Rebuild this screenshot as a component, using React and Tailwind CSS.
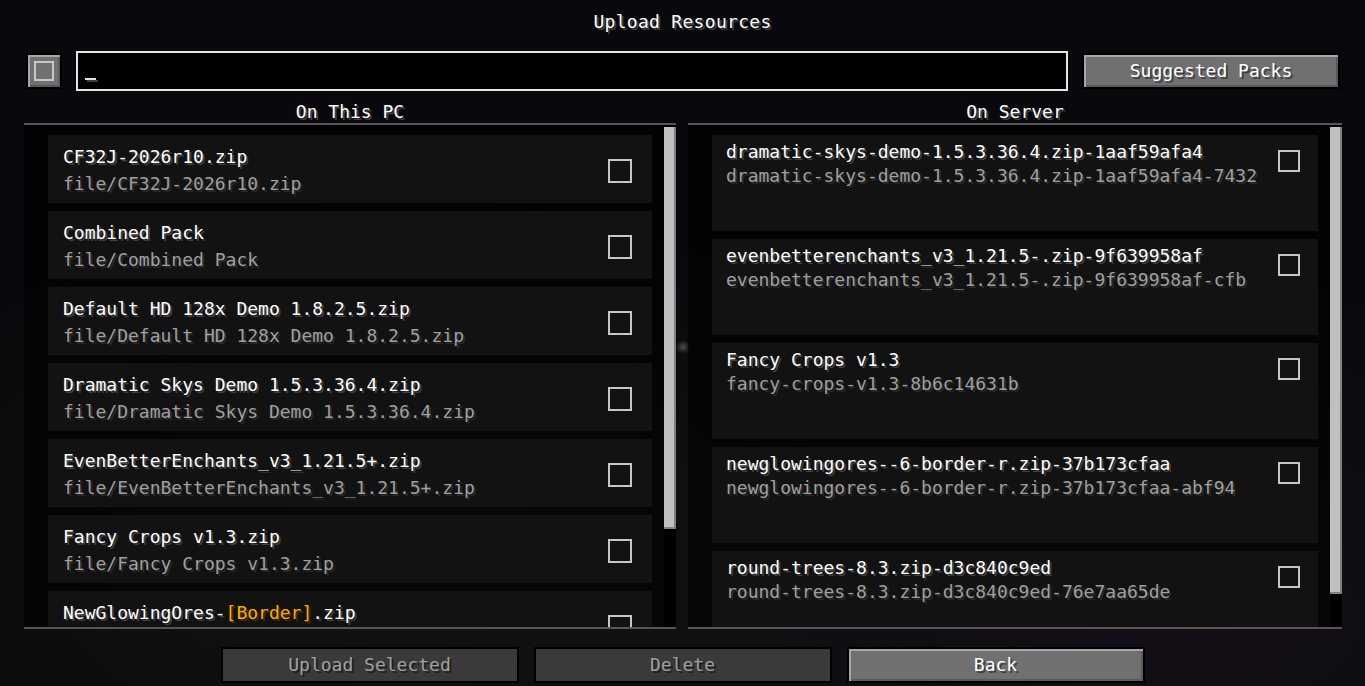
import React from 'react';

const localPacks = [
    { name: 'CF32J-2026r10.zip', path: 'file/CF32J-2026r10.zip' },
    { name: 'Combined Pack', path: 'file/Combined Pack' },
    { name: 'Default HD 128x Demo 1.8.2.5.zip', path: 'file/Default HD 128x Demo 1.8.2.5.zip' },
    { name: 'Dramatic Skys Demo 1.5.3.36.4.zip', path: 'file/Dramatic Skys Demo 1.5.3.36.4.zip' },
    { name: 'EvenBetterEnchants_v3_1.21.5+.zip', path: 'file/EvenBetterEnchants_v3_1.21.5+.zip' },
    { name: 'Fancy Crops v1.3.zip', path: 'file/Fancy Crops v1.3.zip' },
    // scrolled past the bottom edge, only the name row shows
    { name: 'NewGlowingOres-', tag: '[Border]', suffix: '.zip', path: null },
];

const serverPacks = [
    { name: 'dramatic-skys-demo-1.5.3.36.4.zip-1aaf59afa4', id: 'dramatic-skys-demo-1.5.3.36.4.zip-1aaf59afa4-7432' },
    { name: 'evenbetterenchants_v3_1.21.5-.zip-9f639958af', id: 'evenbetterenchants_v3_1.21.5-.zip-9f639958af-cfb' },
    { name: 'Fancy Crops v1.3', id: 'fancy-crops-v1.3-8b6c14631b' },
    { name: 'newglowingores--6-border-r.zip-37b173cfaa', id: 'newglowingores--6-border-r.zip-37b173cfaa-abf94' },
    { name: 'round-trees-8.3.zip-d3c840c9ed', id: 'round-trees-8.3.zip-d3c840c9ed-76e7aa65de' },
];

const white = 'text-white [text-shadow:2px_2px_0_#3f3f3f]';
const grey = 'text-[#a0a0a0] [text-shadow:2px_2px_0_#282828]';

function Checkbox({ size = 'w-[24px] h-[24px]' }) {
    return <div className={`${size} border-2 border-[#c6c6c6] shrink-0`} />;
}

function McButton({ children, disabled, className = '' }) {
    return (
        <div
            className={`border-2 border-black flex items-center justify-center leading-none ${
                disabled
                    ? 'bg-[#3a3a3a] text-[#a0a0a0] [text-shadow:2px_2px_0_#202020]'
                    : 'bg-[#707070] shadow-[inset_2px_2px_0_#a6a6a6,inset_-2px_-2px_0_#5a5a5a] text-white [text-shadow:2px_2px_0_#3f3f3f]'
            } ${className}`}
        >
            {children}
        </div>
    );
}

function Scrollbar({ thumb }) {
    return (
        <div className="w-[12px] shrink-0 bg-black pt-[2px]">
            <div className={`${thumb} bg-[#c0c0c0] border-r-2 border-b-2 border-[#808080]`} />
        </div>
    );
}

function Panel({ width, listWidth, thumb, children }) {
    return (
        <div className={`${width} flex flex-col`}>
            <div className="h-[2px] bg-[#555555]" />
            <div className="flex-1 flex bg-black/60 overflow-hidden">
                <div className={`${listWidth} ml-[24px] mr-[12px] pt-[10px] flex flex-col gap-[8px] overflow-hidden`}>
                    {children}
                </div>
                <Scrollbar thumb={thumb} />
            </div>
            <div className="h-[2px] bg-[#555555]" />
        </div>
    );
}

export default function App() {
    return (
        <div className="w-full h-[686px] overflow-hidden flex flex-col text-[18px] font-['DejaVu_Sans_Mono','Liberation_Mono',monospace] bg-[#09090d] bg-[radial-gradient(circle_at_683px_347px,rgba(200,200,200,0.35),transparent_7px),radial-gradient(ellipse_at_30%_80%,#141414,transparent_45%),radial-gradient(ellipse_at_85%_90%,#140f16,transparent_40%)]">
            {/* Title */}
            <div className={`h-[44px] flex items-center justify-center leading-none tracking-[0.3px] ${white}`}>Upload Resources</div>

            {/* Search row */}
            <div className="mt-[7px] h-[40px] flex items-center pl-[26px] pr-[25px]">
                <McButton className="w-[36px] h-[36px]">
                    <div className="w-[20px] h-[20px] border-2 border-[#c8c8c8]" />
                </McButton>
                <div className="ml-[14px] w-[992px] h-[40px] border-2 border-[#e6e6e6] bg-black flex items-end pl-[7px] pb-[9px]">
                    <span className="w-[11px] h-[2px] bg-[#e0e0e0] shadow-[2px_2px_0_#3f3f3f]" />
                </div>
                <McButton className="ml-[14px] w-[258px] h-[36px]">Suggested Packs</McButton>
            </div>

            {/* Column headers */}
            <div className="h-[32px] flex pl-[24px]">
                <div className={`w-[652px] text-center pt-[11px] leading-[20px] ${white}`}>On This PC</div>
                <div className={`ml-[12px] w-[654px] text-center pt-[11px] leading-[20px] ${white}`}>On Server</div>
            </div>

            {/* Pack lists */}
            <div className="h-[506px] flex pl-[24px] gap-[12px]">
                <Panel width="w-[652px]" listWidth="w-[604px]" thumb="h-[402px]">
                    {localPacks.map((p) => (
                        <div key={p.name} className="h-[68px] shrink-0 bg-[#121212] flex items-center pl-[15px] pr-[20px]">
                            <div className="flex-1 min-w-0 whitespace-nowrap self-start pt-[12px]">
                                <div className={`leading-[20px] ${white}`}>
                                    {p.name}
                                    {p.tag && <span className="text-[#ffaa00] [text-shadow:2px_2px_0_#3f2a00]">{p.tag}</span>}
                                    {p.suffix}
                                </div>
                                {p.path && <div className={`mt-[7px] leading-[20px] ${grey}`}>{p.path}</div>}
                            </div>
                            <div className="mt-[4px]">
                                <Checkbox />
                            </div>
                        </div>
                    ))}
                </Panel>

                <Panel width="w-[654px]" listWidth="w-[606px]" thumb="h-[467px]">
                    {serverPacks.map((p) => (
                        <div key={p.id} className="h-[96px] shrink-0 bg-[#121212] flex items-start pl-[14px] pr-[18px]">
                            <div className="flex-1 min-w-0 whitespace-nowrap pt-[7px]">
                                <div className={`leading-[20px] ${white}`}>{p.name}</div>
                                <div className={`mt-[4px] leading-[20px] ${grey}`}>{p.id}</div>
                            </div>
                            <div className="mt-[15px]">
                                <Checkbox size="w-[22px] h-[22px]" />
                            </div>
                        </div>
                    ))}
                </Panel>
            </div>

            {/* Actions */}
            <div className="mt-[18px] flex justify-center gap-[15px]">
                <McButton disabled className="w-[298px] h-[36px]">Upload Selected</McButton>
                <McButton disabled className="w-[298px] h-[36px]">Delete</McButton>
                <McButton className="w-[298px] h-[36px]">Back</McButton>
            </div>
        </div>
    );
}
